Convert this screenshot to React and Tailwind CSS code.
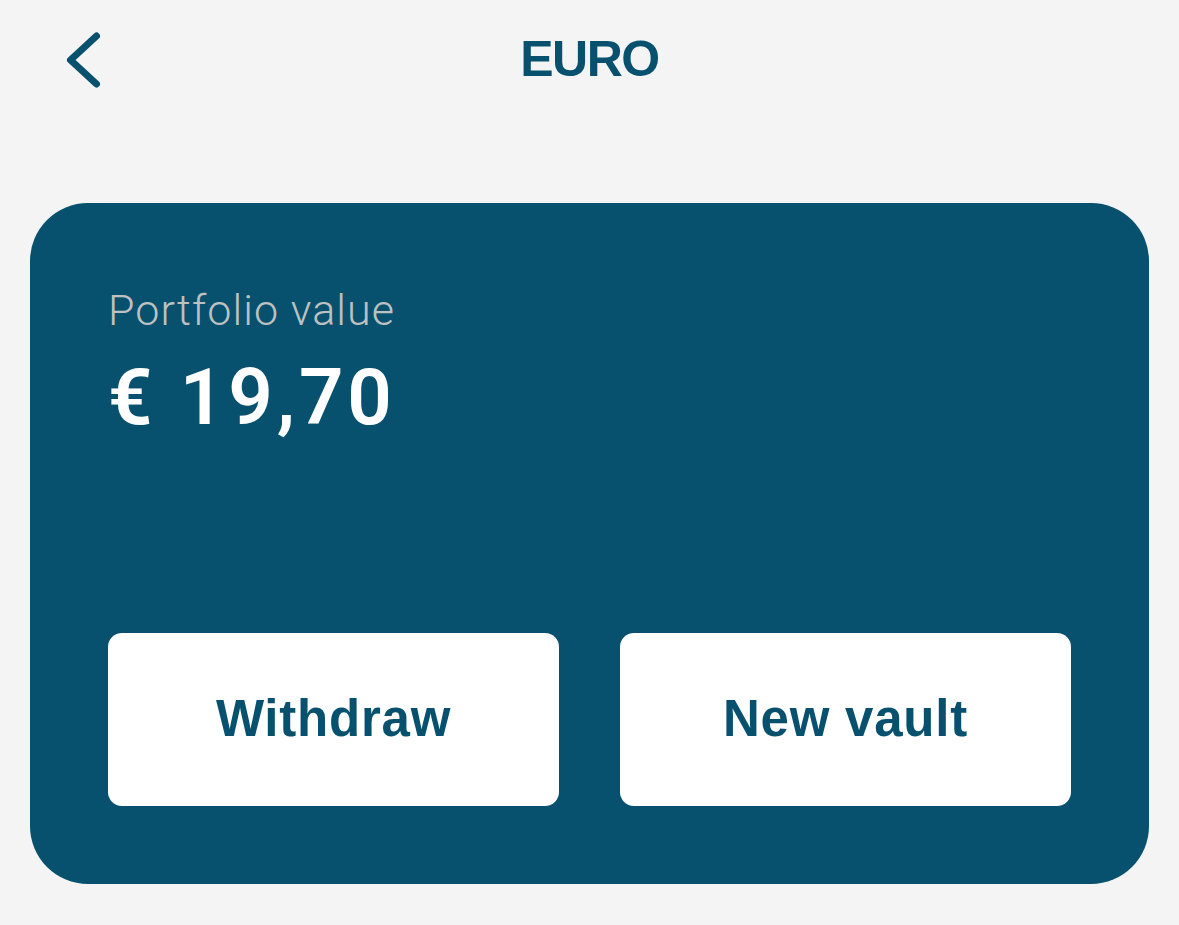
import React from 'react';

const NAVY = 'text-[#07516f]';

const BackChevron = () => (
  <svg width="48" height="66" viewBox="0 0 48 66" fill="none" className="block">
    <path d="M38.5 8 L12.5 32 L38.5 56" stroke="#07516f" strokeWidth="7" strokeLinecap="round" strokeLinejoin="round" />
  </svg>
);

const ActionButton = ({ label }) => (
  <button className="flex h-[173px] flex-1 items-center justify-center rounded-[14px] bg-white">
    <span className={`font-['Liberation_Sans',Arial,sans-serif] text-[51px] font-bold tracking-[0.015em] ${NAVY}`}>
      {label}
    </span>
  </button>
);

export default function App() {
  return (
    <div className="min-h-[925px] w-full bg-[#f4f4f4] font-['Roboto','Liberation_Sans',sans-serif]">
      {/* Header */}
      <div className="relative flex h-[118px] items-center justify-center">
        <button className="absolute left-[58px] top-[28px]" aria-label="Back">
          <BackChevron />
        </button>
        <h1 className={`font-['Liberation_Sans',Arial,sans-serif] text-[50px] font-bold tracking-[-0.03em] ${NAVY}`}>
          EURO
        </h1>
      </div>

      {/* Portfolio card */}
      <div className="px-[30px] pt-[85px]">
        <div className="flex h-[681px] flex-col justify-between rounded-[58px] bg-[#07516f] p-[78px]">
          <div className="mt-[8px]">
            <p className="text-[43px] font-light leading-none tracking-[0.025em] text-[#bfc0c0]">Portfolio value</p>
            <p className="mt-[27px] text-[78px] font-semibold leading-none tracking-[0.05em] text-white">€ 19,70</p>
          </div>
          <div className="flex gap-[61px]">
            <ActionButton label="Withdraw" />
            <ActionButton label="New vault" />
          </div>
        </div>
      </div>
    </div>
  );
}
